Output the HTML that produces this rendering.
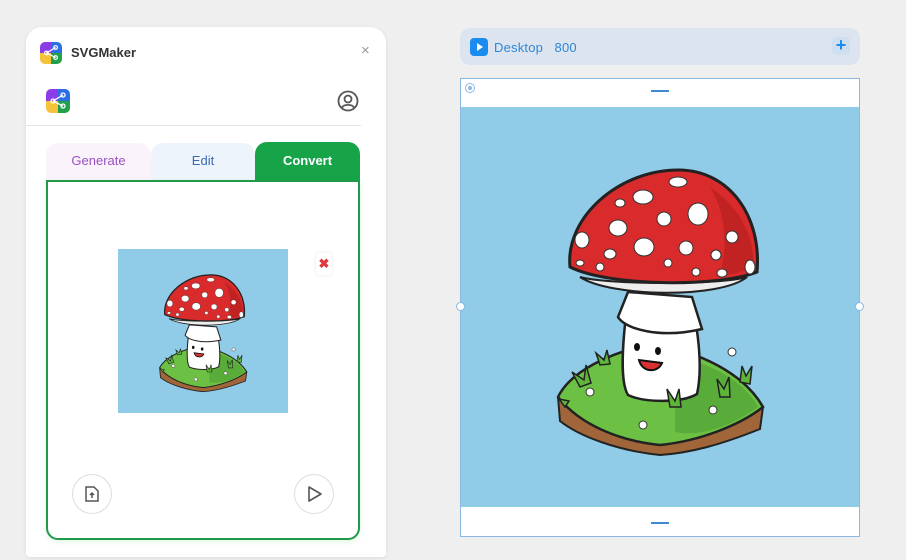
<!DOCTYPE html>
<html><head><meta charset="utf-8">
<style>
*{margin:0;padding:0;box-sizing:border-box}
body{width:906px;height:560px;background:#efefef;font-family:"Liberation Sans",sans-serif;position:relative;overflow:hidden}
.abs{position:absolute}
</style></head><body>
<svg width="0" height="0" style="position:absolute">
<defs>
<symbol id="m" viewBox="0 0 400 400">
<path d="M98,290 C110,270 150,250 190,240 C240,245 285,270 303,300 L300,322 C260,338 230,346 200,348 C160,344 120,330 100,314 Z" fill="#a0663a" stroke="#222" stroke-width="2"/>
<path d="M98,290 C110,265 150,245 190,238 C240,243 285,268 303,300 C280,318 240,334 200,338 C160,334 120,318 98,290 Z" fill="#6cc144" stroke="#222" stroke-width="2.5"/>
<path d="M215,250 C250,255 285,275 298,300 C270,320 240,330 215,325 Z" fill="#4f9e34" opacity=".6"/>
<path d="M167,200 C162,240 160,275 168,288 C185,296 222,296 237,287 C243,260 238,225 232,195 Z" fill="#fff" stroke="#222" stroke-width="2.5"/>
<path d="M168,185 L158,210 C165,222 200,232 242,222 L232,190 Z" fill="#fff" stroke="#222" stroke-width="2.5"/>
<path d="M120,170 C150,190 260,192 287,170 C260,178 150,178 120,170 Z" fill="#eee" stroke="#222" stroke-width="2"/>
<path d="M110,160 C105,110 160,62 220,63 C270,64 302,110 297,165 C260,180 150,180 110,160 Z" fill="#d92b2b" stroke="#222" stroke-width="3"/>
<path d="M250,80 C280,100 295,130 293,160 C280,166 270,168 260,168 C270,130 262,100 250,80Z" fill="#b71f1f" opacity=".7"/>
<g fill="#fff" stroke="#333" stroke-width="1">
<ellipse cx="183" cy="90" rx="10" ry="7"/><ellipse cx="218" cy="75" rx="9" ry="5"/><ellipse cx="238" cy="107" rx="10" ry="11"/>
<ellipse cx="204" cy="112" rx="7" ry="7"/><ellipse cx="158" cy="121" rx="9" ry="8"/><ellipse cx="122" cy="133" rx="7" ry="8"/>
<ellipse cx="184" cy="140" rx="10" ry="9"/><ellipse cx="226" cy="141" rx="7" ry="7"/><ellipse cx="150" cy="147" rx="6" ry="5"/>
<ellipse cx="272" cy="130" rx="6" ry="6"/><ellipse cx="256" cy="148" rx="5" ry="5"/><ellipse cx="290" cy="160" rx="5" ry="7"/>
<ellipse cx="208" cy="156" rx="4" ry="4"/><ellipse cx="236" cy="165" rx="4" ry="4"/><ellipse cx="262" cy="166" rx="5" ry="4"/>
<ellipse cx="160" cy="96" rx="5" ry="4"/><ellipse cx="120" cy="156" rx="4" ry="3"/><ellipse cx="140" cy="160" rx="4" ry="4"/>
</g>
<ellipse cx="177" cy="240" rx="3" ry="4" fill="#111"/><ellipse cx="198" cy="244" rx="3" ry="4" fill="#111"/>
<path d="M179,253 C182,266 198,266 202,256 Z" fill="#d93030" stroke="#111" stroke-width="2"/>
<g stroke="#222" stroke-width="1.5" fill="#5fb53a"><path d="M120,280 l-8,-15 l12,8 l2,-15 l5,18z"/><path d="M210,300 l-3,-18 l8,12 l4,-12 l2,18z"/><path d="M260,290 l-3,-18 l7,10 l5,-12 l1,20z"/><path d="M140,258 l-4,-12 l8,7 l3,-10 l3,14z"/><path d="M280,275 l2,-16 l4,10 l6,-10 l-2,18z"/><path d="M105,300 l-6,-8 l10,2z"/></g>
<g fill="#fff" stroke="#333"><circle cx="130" cy="285" r="4"/><circle cx="183" cy="318" r="4"/><circle cx="253" cy="303" r="4"/><circle cx="272" cy="245" r="4"/></g>
</symbol>
<symbol id="logo" viewBox="0 0 24 24">
<rect x="0" y="0" width="12" height="12" fill="#8b3ee8"/><rect x="12" y="0" width="12" height="12" fill="#2f6fe6"/>
<rect x="0" y="12" width="12" height="12" fill="#f5c23a"/><rect x="12" y="12" width="12" height="12" fill="#21a24a"/>
<g stroke="#fff" stroke-width="1.3" fill="none"><path d="M7,12 L17,6 M7,12 L17,17"/><circle cx="7" cy="12" r="2"/><circle cx="17" cy="6" r="2"/><circle cx="17" cy="17" r="2"/></g>
</symbol>
</defs></svg>

<!-- left panel -->
<div class="abs" style="left:26px;top:27px;width:360px;height:530px;background:#fff;border-radius:16px 16px 4px 4px;box-shadow:0 1px 4px rgba(0,0,0,.08)"></div>
<svg class="abs" style="left:40px;top:42px;border-radius:5px" width="22" height="22"><use href="#logo"/></svg>
<div class="abs" style="left:71px;top:45px;font-size:13px;font-weight:bold;color:#333">SVGMaker</div>
<div class="abs" style="left:361px;top:42px;font-size:15px;color:#999">×</div>
<svg class="abs" style="left:46px;top:89px;border-radius:5px" width="24" height="24"><use href="#logo"/></svg>
<svg class="abs" style="left:337px;top:90px" width="22" height="22" viewBox="0 0 22 22" fill="none" stroke="#555" stroke-width="1.8"><circle cx="11" cy="11" r="9.5"/><circle cx="11" cy="9" r="3.5"/><path d="M5,17.5 C7,14 15,14 17,17.5"/></svg>
<div class="abs" style="left:26px;top:125px;width:335px;height:1px;background:#e5e5e5"></div>
<div class="abs" style="left:46px;top:143px;width:105px;height:40px;background:#fbf3fc;border-radius:12px 12px 0 0;color:#9a4fc4;font-size:13px;text-align:center;line-height:35px">Generate</div>
<div class="abs" style="left:151px;top:143px;width:104px;height:40px;background:#eef4fc;border-radius:12px 12px 0 0;color:#3a6aae;font-size:13px;text-align:center;line-height:35px">Edit</div>
<div class="abs" style="left:255px;top:142px;width:105px;height:42px;background:#17a348;border-radius:12px 12px 0 0;color:#fff;font-weight:bold;font-size:13px;text-align:center;line-height:37px">Convert</div>
<div class="abs" style="left:46px;top:180px;width:314px;height:360px;border:2px solid #1e9a4a;border-radius:0 0 12px 12px;background:#fff;box-shadow:0 2px 6px rgba(40,200,90,.15)"></div>
<div class="abs" style="left:118px;top:249px;width:170px;height:164px;background:#90cce8"></div>
<svg class="abs" style="left:118px;top:249px" width="170" height="164" preserveAspectRatio="none" viewBox="0 0 400 400"><use href="#m"/></svg>
<div class="abs" style="left:316px;top:253px;width:16px;height:22px;background:#fff;box-shadow:0 0 3px rgba(0,0,0,.1);color:#e0383e;font-size:13px;font-weight:bold;text-align:center;line-height:22px">✖</div>
<div class="abs" style="left:72px;top:474px;width:40px;height:40px;border:1px solid #ddd;border-radius:50%"></div>
<svg class="abs" style="left:84px;top:485px" width="16" height="18" viewBox="0 0 16 18" fill="none" stroke="#555" stroke-width="1.5"><path d="M2,2 h8 l4,4 v10 h-12 z"/><path d="M8,13 v-5 M6,10 l2,-2 l2,2"/></svg>
<div class="abs" style="left:294px;top:474px;width:40px;height:40px;border:1px solid #ddd;border-radius:50%"></div>
<svg class="abs" style="left:306px;top:485px" width="18" height="18" viewBox="0 0 18 18" fill="none" stroke="#555" stroke-width="1.6" stroke-linejoin="round"><path d="M3,2 L15,9 L3,16 Z"/></svg>

<!-- right -->
<div class="abs" style="left:460px;top:28px;width:400px;height:37px;background:#dce5ef;border-radius:10px"></div>
<div class="abs" style="left:470px;top:38px;width:18px;height:18px;background:#1a8cf0;border-radius:4px"></div>
<svg class="abs" style="left:470px;top:38px" width="18" height="18"><path d="M7,5 L13,9 L7,13Z" fill="#fff"/></svg>
<div class="abs" style="left:494px;top:40px;font-size:13px;color:#2f86d6;letter-spacing:.2px">Desktop&nbsp;&nbsp;&nbsp;800</div>
<div class="abs" style="left:832px;top:37px;width:18px;height:18px;background:#cfdfef;border-radius:4px;color:#1a8cf0;font-size:18px;line-height:17px;text-align:center;font-weight:bold">+</div>
<div class="abs" style="left:460px;top:78px;width:400px;height:459px;border:1px solid #8ab8e2;background:#fff"></div>
<div class="abs" style="left:461px;top:107px;width:398px;height:400px;background:#90cce8"></div>
<svg class="abs" style="left:460px;top:107px" width="400" height="400" viewBox="0 0 400 400"><use href="#m"/></svg>
<div class="abs" style="left:651px;top:90px;width:18px;height:2px;background:#3e8ad6"></div>
<div class="abs" style="left:651px;top:522px;width:18px;height:2px;background:#3e8ad6"></div>
<div class="abs" style="left:465px;top:83px;width:10px;height:10px;border:1px solid #8ab8e2;border-radius:50%"></div>
<div class="abs" style="left:468px;top:86px;width:4px;height:4px;background:#8ab8e2;border-radius:50%"></div>
<div class="abs" style="left:456px;top:302px;width:9px;height:9px;border:1px solid #8ab8e2;border-radius:50%;background:#fff"></div>
<div class="abs" style="left:855px;top:302px;width:9px;height:9px;border:1px solid #8ab8e2;border-radius:50%;background:#fff"></div>
</body></html>
